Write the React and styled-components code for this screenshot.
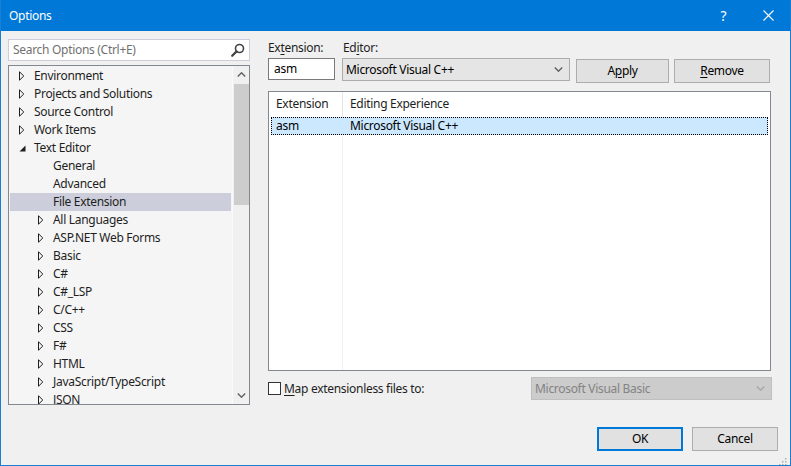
import React from "react";
import styled, { createGlobalStyle } from "styled-components";

const Global = createGlobalStyle`
  html, body { margin: 0; padding: 0; background: #f0f0f0; }
  body { font-family: "Noto Sans", "Open Sans", sans-serif; font-size: 12px; letter-spacing: -0.3px; color: #000; }
  * { box-sizing: border-box; }
`;

const Window = styled.div`
  width: 791px;
  height: 466px;
  border: 1px solid #1a7fd4;
  border-top: none;
  background: #f0f0f0;
  display: flex;
  flex-direction: column;
  position: relative;
  overflow: hidden;
`;

const TitleBar = styled.div`
  height: 31px;
  background: #0078d7;
  color: #fff;
  display: flex;
  align-items: center;
  padding-left: 9px;
  font-size: 12px;
  margin: 0 -1px;
`;

const Title = styled.div`
  flex: 1;
  padding-bottom: 1px;
`;

const TitleButton = styled.div`
  width: 45px;
  height: 31px;
  display: flex;
  align-items: center;
  justify-content: center;
  color: #fff;
  font-size: 14px;
`;

const Body = styled.div`
  flex: 1;
  padding: 8px 12px 0 7px;
  display: flex;
  flex-direction: column;
`;

const Main = styled.div`
  display: flex;
  height: 366px;
`;

const LeftPanel = styled.div`
  width: 242px;
  display: flex;
  flex-direction: column;
  gap: 4px;
`;

const SearchBox = styled.div`
  height: 22px;
  border: 1px solid #cccedb;
  background: #fff;
  display: flex;
  align-items: center;
  padding: 0 4px 1px 4px;
  color: #717171;
`;

const SearchText = styled.div`
  flex: 1;
`;

const TreeBox = styled.div`
  height: 340px;
  border: 1px solid #828790;
  background: #f5f5f5;
  display: flex;
  overflow: hidden;
`;

const TreeList = styled.div`
  flex: 1;
  padding: 1px 1px 0 1px;
  overflow: hidden;
`;

const TreeRow = styled.div`
  height: 18px;
  display: flex;
  align-items: center;
  padding-left: ${(p) => 9 + p.$level * 19}px;
  background: ${(p) => (p.$selected ? "#cccedb" : "transparent")};
  color: #1e1e1e;
  white-space: nowrap;
`;

const TreeLabel = styled.span`
  position: relative;
  top: -1px;
`;

const Expander = styled.div`
  width: 15px;
  height: 18px;
  display: flex;
  align-items: center;
  flex-shrink: 0;
`;

const Scrollbar = styled.div`
  width: 17px;
  background: #f0f0f0;
  display: flex;
  flex-direction: column;
  align-items: center;
  border-left: 1px solid #fafafa;
`;

const ScrollArrow = styled.div`
  height: 17px;
  width: 100%;
  display: flex;
  align-items: center;
  justify-content: center;
`;

const ScrollThumb = styled.div`
  width: 15px;
  height: 121px;
  background: #cdcdcd;
  margin-top: 1px;
`;

const ScrollSpacer = styled.div`
  flex: 1;
`;

const RightPanel = styled.div`
  margin-left: 18px;
  width: 504px;
  display: flex;
  flex-direction: column;
`;

const LabelRow = styled.div`
  display: flex;
  height: 19px;
  align-items: center;
  padding-bottom: 3px;
`;

const Label = styled.div`
  width: ${(p) => p.$width || "auto"};
  color: #1e1e1e;
`;

const InputRow = styled.div`
  display: flex;
  align-items: flex-start;
  height: 25px;
`;

const TextInput = styled.div`
  width: 67px;
  height: 22px;
  border: 1px solid #7a7a7a;
  background: #fff;
  display: flex;
  align-items: center;
  padding: 0 0 1px 5px;
`;

const Combo = styled.div`
  width: ${(p) => p.$width}px;
  height: 23px;
  margin-left: ${(p) => p.$ml || 0}px;
  border: 1px solid ${(p) => (p.$disabled ? "#bfbfbf" : "#acacac")};
  background: ${(p) => (p.$disabled ? "#cccccc" : "#e5e5e5")};
  color: ${(p) => (p.$disabled ? "#838383" : "#000")};
  display: flex;
  align-items: center;
  padding: 0 6px 1px 3px;
`;

const ComboText = styled.div`
  flex: 1;
`;

const Button = styled.div`
  width: ${(p) => p.$width}px;
  height: ${(p) => p.$height || 24}px;
  margin-left: ${(p) => p.$ml || 0}px;
  margin-top: ${(p) => p.$mt || 0}px;
  border: ${(p) => (p.$default ? "2px solid #0078d7" : "1px solid #adadad")};
  background: #e1e1e1;
  display: flex;
  align-items: center;
  justify-content: center;
  padding-bottom: 2px;
  color: #000;
`;

const U = styled.span`
  text-decoration: underline;
  text-underline-offset: 2px;
`;

const ListView = styled.div`
  margin-top: 8px;
  width: 503px;
  height: 280px;
  border: 1px solid #828790;
  background: #fff;
  position: relative;
  display: flex;
  flex-direction: column;
`;

const ListHeader = styled.div`
  display: flex;
  height: 25px;
  align-items: center;
`;

const HeaderCell = styled.div`
  width: ${(p) => (p.$width ? `${p.$width}px` : "auto")};
  flex: ${(p) => (p.$width ? "none" : 1)};
  height: 100%;
  display: flex;
  align-items: center;
  padding: 0 0 2px 7px;
  border-right: ${(p) => (p.$width ? "1px solid #e5e5e5" : "none")};
  color: #1e1e1e;
`;

const ListBody = styled.div`
  flex: 1;
  display: flex;
  position: relative;
`;

const ColumnLine = styled.div`
  position: absolute;
  left: 73px;
  top: 0;
  bottom: 0;
  width: 1px;
  background: #f0f0f0;
`;

const ListRow = styled.div`
  position: relative;
  margin: 0 1px 0 2px;
  height: 18px;
  width: 497px;
  display: flex;
  align-items: center;
  padding-bottom: 2px;
  background: #cce8ff;
  border: 1px dotted #000;
`;

const RowCell = styled.div`
  width: ${(p) => (p.$width ? `${p.$width}px` : "auto")};
  padding-left: ${(p) => p.$pl}px;
`;

const MapRow = styled.div`
  margin-top: 6px;
  display: flex;
  align-items: center;
  height: 23px;
`;

const CheckBox = styled.div`
  width: 13px;
  height: 13px;
  border: 1px solid #333;
  background: #fff;
  margin-right: 3px;
`;

const MapLabel = styled.div`
  flex: 1;
  color: #1e1e1e;
`;

const Footer = styled.div`
  display: flex;
  justify-content: flex-end;
  gap: 9px;
  padding-top: 22px;
`;

const Grip = styled.div`
  position: absolute;
  right: 3px;
  bottom: 3px;
  width: 9px;
  height: 9px;
`;

const TriangleRight = () => (
  <svg width="6" height="10" viewBox="0 0 6 10">
    <path d="M0.5 0.8 L4.8 5 L0.5 9.2 Z" fill="none" stroke="#1e1e1e" strokeWidth="1" />
  </svg>
);

const TriangleDown = () => (
  <svg width="7" height="7" viewBox="0 0 7 7">
    <path d="M6.5 0.5 L6.5 6.5 L0.5 6.5 Z" fill="#1e1e1e" />
  </svg>
);

const Chevron = ({ up, color = "#606060", w = 9, h = 5 }) => (
  <svg width={w} height={h} viewBox="0 0 9 5">
    <path
      d={up ? "M0.8 4.5 L4.5 0.8 L8.2 4.5" : "M0.8 0.5 L4.5 4.2 L8.2 0.5"}
      fill="none"
      stroke={color}
      strokeWidth="1.4"
    />
  </svg>
);

const SearchIcon = () => (
  <svg width="14" height="14" viewBox="0 0 14 14">
    <circle cx="8.5" cy="5.5" r="4" fill="none" stroke="#424242" strokeWidth="1.6" />
    <path d="M5.6 8.4 L1.2 12.8" stroke="#424242" strokeWidth="2.2" strokeLinecap="round" />
  </svg>
);

const treeItems = [
  { label: "Environment", level: 0, exp: "closed" },
  { label: "Projects and Solutions", level: 0, exp: "closed" },
  { label: "Source Control", level: 0, exp: "closed" },
  { label: "Work Items", level: 0, exp: "closed" },
  { label: "Text Editor", level: 0, exp: "open" },
  { label: "General", level: 1 },
  { label: "Advanced", level: 1 },
  { label: "File Extension", level: 1, selected: true },
  { label: "All Languages", level: 1, exp: "closed" },
  { label: "ASP.NET Web Forms", level: 1, exp: "closed" },
  { label: "Basic", level: 1, exp: "closed" },
  { label: "C#", level: 1, exp: "closed" },
  { label: "C#_LSP", level: 1, exp: "closed" },
  { label: "C/C++", level: 1, exp: "closed" },
  { label: "CSS", level: 1, exp: "closed" },
  { label: "F#", level: 1, exp: "closed" },
  { label: "HTML", level: 1, exp: "closed" },
  { label: "JavaScript/TypeScript", level: 1, exp: "closed" },
  { label: "JSON", level: 1, exp: "closed" },
];

export default function App() {
  return (
    <>
      <Global />
      <Window>
        <TitleBar>
          <Title>Options</Title>
          <TitleButton>?</TitleButton>
          <TitleButton>
            <svg width="11" height="11" viewBox="0 0 11 11">
              <path d="M0.5 0.5 L10.5 10.5 M10.5 0.5 L0.5 10.5" stroke="#fff" strokeWidth="1.1" />
            </svg>
          </TitleButton>
        </TitleBar>
        <Body>
          <Main>
            <LeftPanel>
              <SearchBox>
                <SearchText>Search Options (Ctrl+E)</SearchText>
                <SearchIcon />
              </SearchBox>
              <TreeBox>
                <TreeList>
                  {treeItems.map((it) => (
                    <TreeRow key={it.label} $level={it.level} $selected={it.selected}>
                      <Expander>
                        {it.exp === "closed" && <TriangleRight />}
                        {it.exp === "open" && <TriangleDown />}
                      </Expander>
                      <TreeLabel>{it.label}</TreeLabel>
                    </TreeRow>
                  ))}
                </TreeList>
                <Scrollbar>
                  <ScrollArrow>
                    <Chevron up />
                  </ScrollArrow>
                  <ScrollThumb />
                  <ScrollSpacer />
                  <ScrollArrow>
                    <Chevron />
                  </ScrollArrow>
                </Scrollbar>
              </TreeBox>
            </LeftPanel>
            <RightPanel>
              <LabelRow>
                <Label $width="75px">
                  Ex<U>t</U>ension:
                </Label>
                <Label>
                  Ed<U>i</U>tor:
                </Label>
              </LabelRow>
              <InputRow>
                <TextInput>asm</TextInput>
                <Combo $width={228} $ml={7}>
                  <ComboText>Microsoft Visual C++</ComboText>
                  <Chevron w={9} h={5} />
                </Combo>
                <Button $width={93} $ml={6} $mt={1}>
                  A<U>p</U>ply
                </Button>
                <Button $width={96} $ml={5} $mt={1}>
                  <U>R</U>emove
                </Button>
              </InputRow>
              <ListView>
                <ListHeader>
                  <HeaderCell $width={74}>Extension</HeaderCell>
                  <HeaderCell>Editing Experience</HeaderCell>
                </ListHeader>
                <ListBody>
                  <ColumnLine />
                  <ListRow>
                    <RowCell $width={78} $pl={4}>asm</RowCell>
                    <RowCell $pl={0}>Microsoft Visual C++</RowCell>
                  </ListRow>
                </ListBody>
              </ListView>
              <MapRow>
                <CheckBox />
                <MapLabel>
                  <U>M</U>ap extensionless files to:
                </MapLabel>
                <Combo $width={241} $disabled>
                  <ComboText>Microsoft Visual Basic</ComboText>
                  <Chevron color="#a8a8a8" />
                </Combo>
              </MapRow>
            </RightPanel>
          </Main>
          <Footer>
            <Button $width={86} $default>
              OK
            </Button>
            <Button $width={86}>Cancel</Button>
          </Footer>
        </Body>
        <Grip>
          <svg width="9" height="9" viewBox="0 0 9 9">
            {[
              [7, 1], [7, 4], [4, 4], [7, 7], [4, 7], [1, 7],
            ].map(([x, y]) => (
              <rect key={`${x}-${y}`} x={x} y={y} width="1.5" height="1.5" fill="#b0b0b0" />
            ))}
          </svg>
        </Grip>
      </Window>
    </>
  );
}
